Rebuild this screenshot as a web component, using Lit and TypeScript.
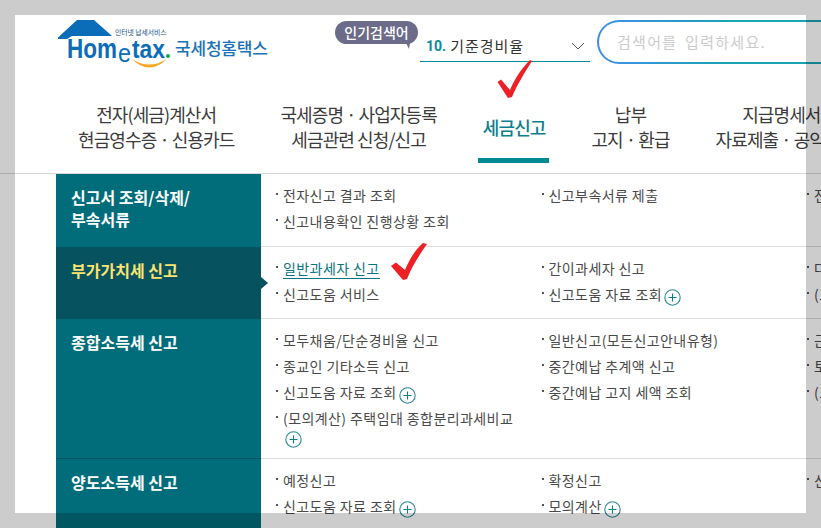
import { LitElement, html, css, svg } from 'lit';
import { customElement } from 'lit/decorators.js';

type Link = { text: string; plus?: boolean; active?: boolean };
type Section = { title: string[]; active?: boolean; links: Link[] };

const NAV = [
  ['전자(세금)계산서', '현금영수증 · 신용카드'],
  ['국세증명 · 사업자등록', '세금관련 신청/신고'],
  ['세금신고'],
  ['납부', '고지 · 환급'],
  ['지급명세서·', '자료제출 · 공익법인'],
];

const SECTIONS: Section[] = [
  {
    title: ['신고서 조회/삭제/', '부속서류'],
    links: [
      { text: '전자신고 결과 조회' },
      { text: '신고부속서류 제출' },
      { text: '전자신고 내역' },
      { text: '신고내용확인 진행상황 조회' },
    ],
  },
  {
    title: ['부가가치세 신고'],
    active: true,
    links: [
      { text: '일반과세자 신고', active: true },
      { text: '간이과세자 신고' },
      { text: '다른 신고' },
      { text: '신고도움 서비스' },
      { text: '신고도움 자료 조회', plus: true },
      { text: '(모의계산)' },
    ],
  },
  {
    title: ['종합소득세 신고'],
    links: [
      { text: '모두채움/단순경비율 신고' },
      { text: '일반신고(모든신고안내유형)' },
      { text: '근로소득' },
      { text: '종교인 기타소득 신고' },
      { text: '중간예납 추계액 신고' },
      { text: '토지등' },
      { text: '신고도움 자료 조회', plus: true },
      { text: '중간예납 고지 세액 조회' },
      { text: '(모의계산)' },
      { text: '(모의계산) 주택임대 종합분리과세비교', plus: true },
    ],
  },
  {
    title: ['양도소득세 신고'],
    links: [
      { text: '예정신고' },
      { text: '확정신고' },
      { text: '신고도움' },
      { text: '신고도움 자료 조회', plus: true },
      { text: '모의계산', plus: true },
    ],
  },
];

@customElement('app-root')
export class AppRoot extends LitElement {
  static styles = css`
    :host {
      display: block;
      position: relative;
      width: 821px;
      height: 528px;
      overflow: hidden;
      background: #fff;
      color: #444;
      font-family: 'Noto Sans CJK KR', 'Noto Sans', sans-serif;
    }

    .header {
      display: flex;
      align-items: flex-start;
      height: 102px;
      padding: 18px 0 0 58px;
      box-sizing: border-box;
    }

    .logo {
      flex: none;
      display: block;
      width: 215px;
      height: 56px;
      margin-right: 62px;
    }

    .logo .en {
      font-family: 'Liberation Sans', sans-serif;
      font-weight: 700;
      fill: #0b6db8;
    }

    .logo .e {
      font-family: 'Liberation Sans', sans-serif;
      fill: #0b6db8;
    }

    .logo .ko {
      font-weight: 500;
      fill: #1a72b8;
    }

    .tag {
      flex: none;
      position: relative;
      width: 83px;
      height: 23px;
      margin: 3px 2px 0 0;
      border-radius: 12px;
      background: #6c6c8a;
      color: #fff;
      font-size: 14px;
      font-weight: 500;
      line-height: 23px;
      text-align: center;
    }

    .tag::after {
      content: '';
      position: absolute;
      right: 8px;
      bottom: -5px;
      border-top: 6px solid #6c6c8a;
      border-left: 3px solid transparent;
      border-right: 1px solid transparent;
    }

    .select {
      flex: none;
      display: flex;
      align-items: center;
      width: 159px;
      height: 31px;
      margin: 12px 7px 0 0;
      padding: 0 5px 0 6px;
      border-bottom: 1px solid #0a8a96;
      font-size: 14px;
      color: #333;
    }

    .select b {
      color: #088a98;
      margin-right: 4px;
      font-family: Roboto, sans-serif;
    }

    .select span {
      flex: 1;
      font-size: 15px;
      letter-spacing: 1px;
    }

    .search {
      flex: none;
      width: 320px;
      height: 44px;
      margin-top: 2px;
      padding-left: 18px;
      box-sizing: border-box;
      border: 2px solid transparent;
      border-radius: 22px;
      background: linear-gradient(#fff, #fff) padding-box,
        linear-gradient(90deg, #418fe8, #1aa2b6 40%) border-box;
      color: #ccc;
      font-size: 15px;
      line-height: 40px;
      letter-spacing: 1.3px;
      word-spacing: 3px;
    }

    .nav {
      display: flex;
      gap: 46px;
      height: 71px;
      padding-left: 78px;
      border-bottom: 1px solid #d8d8d8;
    }

    .nav-item {
      flex: none;
      position: relative;
      height: 50px;
      display: flex;
      flex-direction: column;
      justify-content: center;
      align-items: center;
      font-size: 18px;
      line-height: 25px;
      letter-spacing: -0.9px;
      color: #3b3b3b;
      white-space: nowrap;
    }

    .nav-item.on {
      color: #0c7f8d;
      font-weight: 500;
    }

    .nav-item.on::after {
      content: '';
      position: absolute;
      left: -5px;
      right: -4px;
      top: 56px;
      height: 5px;
      background: #008a96;
    }

    .menu {
      margin-left: 56px;
    }

    .row {
      display: grid;
      grid-template-columns: 205px 1fr;
    }

    .side {
      position: relative;
      padding: 12px 15px 0;
      background: #016d7a;
      color: #fff;
      font-size: 16px;
      font-weight: 700;
      line-height: 22px;
    }

    .row.on .side {
      background: #06525e;
      color: #fbe36f;
    }

    .row.on .side::after {
      content: '';
      position: absolute;
      left: 100%;
      top: 30px;
      border-left: 7px solid #06525e;
      border-top: 6px solid transparent;
      border-bottom: 6px solid transparent;
    }

    .row.third .side {
      border-bottom: 1px solid #04545f;
    }

    .links {
      display: grid;
      grid-template-columns: repeat(3, 265.5px);
      align-content: start;
      row-gap: 8px;
      margin: 0;
      padding: 12px 0 15px 14px;
      list-style: none;
      border-bottom: 1px solid #dcdcdc;
      font-size: 14px;
      line-height: 18px;
      letter-spacing: 0.42px;
      color: #4a4a4a;
    }

    .row:first-child .links {
      padding-bottom: 16px;
    }

    .row.third .links {
      padding-bottom: 13px;
    }

    .links li {
      position: relative;
      padding: 0 22px 0 8px;
    }

    .links li::before {
      content: '';
      position: absolute;
      left: 1px;
      top: 7px;
      width: 2px;
      height: 2px;
      background: #555;
    }

    .links a {
      color: inherit;
    }

    .links a.on {
      color: #0a7483;
      text-decoration: none;
      border-bottom: 1px solid #0a7483;
    }

    .plus {
      display: inline-block;
      width: 17px;
      height: 17px;
      margin: 0 0 -3px 2px;
      vertical-align: -2.5px;
    }

    .marks {
      position: absolute;
      left: 0;
      top: 0;
      pointer-events: none;
    }

    .shade {
      position: absolute;
      left: 15px;
      top: 15px;
      width: 791px;
      height: 498px;
      box-shadow: 0 0 0 900px rgba(0, 0, 0, 0.2);
      pointer-events: none;
    }
  `;

  private plus() {
    return html`<svg class="plus" viewBox="0 0 17 17">
      <circle cx="8.5" cy="8.5" r="7.7" fill="#fff" stroke="#2a8796" stroke-width="1.1"></circle>
      <path d="M8.5 4.5v8M4.5 8.5h8" stroke="#0a7f8d" stroke-width="1.1"></path>
    </svg>`;
  }

  private logo() {
    return html`<svg class="logo" viewBox="0 0 215 56">
      <path d="M0 19.5 L19 2 H36 L54 18 H14 L9 21 H0 Z" fill="#0b6db8"></path>
      <text class="en" x="9" y="39.7" font-size="27" textLength="50" lengthAdjust="spacingAndGlyphs">Hom</text>
      <text class="e" x="60" y="44" font-size="26" textLength="13" lengthAdjust="spacingAndGlyphs">e</text>
      <text class="en" x="74" y="39.7" font-size="26" textLength="33" lengthAdjust="spacingAndGlyphs">tax</text>
      <circle cx="110" cy="38" r="2" fill="#1aa650"></circle>
      <path d="M74 41 Q91 58 109 41 Q91 52 74 41 Z" fill="#f5a623"></path>
      <text x="57" y="16.5" font-size="6.8" fill="#20508c">인터넷 납세서비스</text>
      <text class="ko" x="117" y="37" font-size="17" letter-spacing="-0.2">국세청홈택스</text>
    </svg>`;
  }

  private marks() {
    return html`<svg class="marks" width="821" height="528" viewBox="0 0 821 528">
      ${svg`<path fill="#ee2026" d="M497.5 82 L501 79.5 L510 90 C515 78 522 68 530 60 L532 61 C525 72 517 85 512 97 L508 98 Z"></path>
      <path fill="#ee2026" d="M391 266 L396 262.5 L405 270 C410 258 416 249 423 243 L427 244 C420 254 412 266 407 279 L403 280 Z"></path>`}
    </svg>`;
  }

  render() {
    return html`
      <div class="header">
        ${this.logo()}
        <div class="tag">인기검색어</div>
        <div class="select">
          <b>10.</b><span>기준경비율</span>
          <svg width="14" height="8" viewBox="0 0 14 8">
            <path d="M1 1l6 6 6-6" fill="none" stroke="#555" stroke-width="1"></path>
          </svg>
        </div>
        <div class="search">검색어를 입력하세요.</div>
      </div>
      <div class="nav">
        ${NAV.map(
          (lines, i) => html`<div class="nav-item ${i === 2 ? 'on' : ''}">
            ${lines.map((l) => html`<div>${l}</div>`)}
          </div>`
        )}
      </div>
      <div class="menu">
        ${SECTIONS.map(
          (s, i) => html`<div class="row ${s.active ? 'on' : ''} ${i === 2 ? 'third' : ''}">
            <div class="side">${s.title.map((t) => html`<div>${t}</div>`)}</div>
            <ul class="links">
              ${s.links.map(
                (l) => html`<li>
                  <a class="${l.active ? 'on' : ''}">${l.text}</a>${l.plus ? this.plus() : ''}
                </li>`
              )}
            </ul>
          </div>`
        )}
      </div>
      ${this.marks()}
      <div class="shade"></div>
    `;
  }
}
